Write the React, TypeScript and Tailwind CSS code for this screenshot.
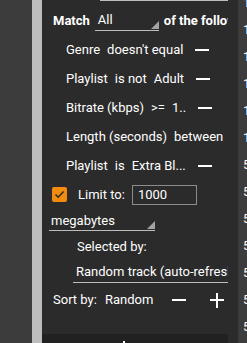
const numbers = ["1", "1", "1", "1", "1", "1", "5", "5", "5", "5", "5", "5", "5"];

function Minus({ className = "" }: { className?: string }) {
  return <span className={`block h-[2px] w-[14px] shrink-0 bg-white ${className}`} />;
}

function Corner() {
  return (
    <svg className="absolute bottom-[1px] right-0" width="8" height="8" viewBox="0 0 8 8">
      <polygon points="8,0 8,8 0,8" fill="#a3a3a3" />
    </svg>
  );
}

function Condition({ parts, minus = true }: { parts: string[]; minus?: boolean }) {
  return (
    <div className="flex h-[29px] shrink-0 items-center whitespace-nowrap pl-[24px]">
      <div className="flex min-w-[117px] shrink-0 gap-[7px]">
        {parts.map((p, i) => (
          <span key={i}>{p}</span>
        ))}
      </div>
      {minus && <Minus className="ml-[12px]" />}
    </div>
  );
}

export default function App() {
  return (
    <div className="flex h-[343px] w-[247px] overflow-hidden bg-[#2b2b2b] font-['Roboto',sans-serif] text-[13px] text-white">
      <div className="w-[32px] shrink-0 bg-[#3c3c3c]" />
      <div className="w-[10px] shrink-0 bg-[#bdbdbd]" />

      <div className="flex w-[196px] shrink-0 flex-col">
        <div className="flex w-[186px] flex-1 flex-col overflow-hidden">
          <div className="ml-[58px] h-px w-[128px] shrink-0 bg-[#bdbdbd]" />

          <div className="mt-[5px] flex h-[29px] shrink-0 items-center whitespace-nowrap pl-[11px] font-bold">
            <span>Match</span>
            <div className="relative ml-[5px] flex h-[20px] w-[64px] shrink-0 items-center border-b border-[#bdbdbd] pl-[3px] font-normal">
              All
              <Corner />
            </div>
            <span className="ml-[5px]">of the following</span>
          </div>

          <Condition parts={["Genre", "doesn't equal"]} />
          <Condition parts={["Playlist", "is not", "Adult"]} />
          <Condition parts={["Bitrate (kbps)", ">=", "1.."]} />
          <Condition parts={["Length (seconds)", "between"]} />
          <Condition parts={["Playlist", "is", "Extra Bl..."]} />

          <div className="flex h-[29px] shrink-0 items-center whitespace-nowrap pl-[10px]">
            <span className="flex h-[15px] w-[15px] shrink-0 items-center justify-center rounded-[2px] bg-[#f28c0f]">
              <svg width="11" height="11" viewBox="0 0 11 11">
                <polyline points="1.5,5.5 4.2,8.2 9.5,2.5" fill="none" stroke="#2b2b2b" strokeWidth="1.6" />
              </svg>
            </span>
            <span className="ml-[11px]">Limit to:</span>
            <div className="ml-[7px] flex h-[20px] w-[65px] shrink-0 items-center border border-[#8c8c8c] pl-[5px]">
              1000
            </div>
          </div>

          <div className="flex h-[24px] shrink-0 items-center pl-[7px]">
            <div className="relative flex h-[19px] w-[106px] shrink-0 items-center border-b border-[#bdbdbd] pl-[2px]">
              megabytes
              <Corner />
            </div>
          </div>

          <div className="flex h-[28px] shrink-0 items-center pl-[35px]">Selected by:</div>

          <div className="flex h-[22px] shrink-0 items-center pl-[31px]">
            <div className="relative flex h-[22px] w-[180px] shrink-0 items-center overflow-hidden whitespace-nowrap border-b border-[#bdbdbd] pl-[3px]">
              Random track (auto-refresh)
            </div>
          </div>

          <div className="flex h-[34px] shrink-0 items-center whitespace-nowrap pl-[11px]">
            <span>Sort by:</span>
            <span className="ml-[8px] w-[48px]">Random</span>
            <Minus className="ml-[19px]" />
            <span className="relative ml-[24px] h-[15px] w-[14px] shrink-0">
              <span className="absolute left-0 top-[6px] h-[2px] w-[14px] bg-white" />
              <span className="absolute left-[6px] top-0 h-[15px] w-[2px] bg-white" />
            </span>
          </div>
        </div>

        <div className="h-[9px] w-[186px] shrink-0 bg-[#212121] pl-[81px] pt-[7px]">
          <span className="block h-[2px] w-[2px] bg-white" />
        </div>
      </div>

      <div className="w-[9px] shrink-0 overflow-hidden bg-[#3c3c3c]">
        <div className="mt-[-11.5px]">
          {numbers.map((n, i) => (
            <div key={i} className="h-[27px] pl-[5px] leading-[27px]">
              {n}
            </div>
          ))}
        </div>
      </div>
    </div>
  );
}
